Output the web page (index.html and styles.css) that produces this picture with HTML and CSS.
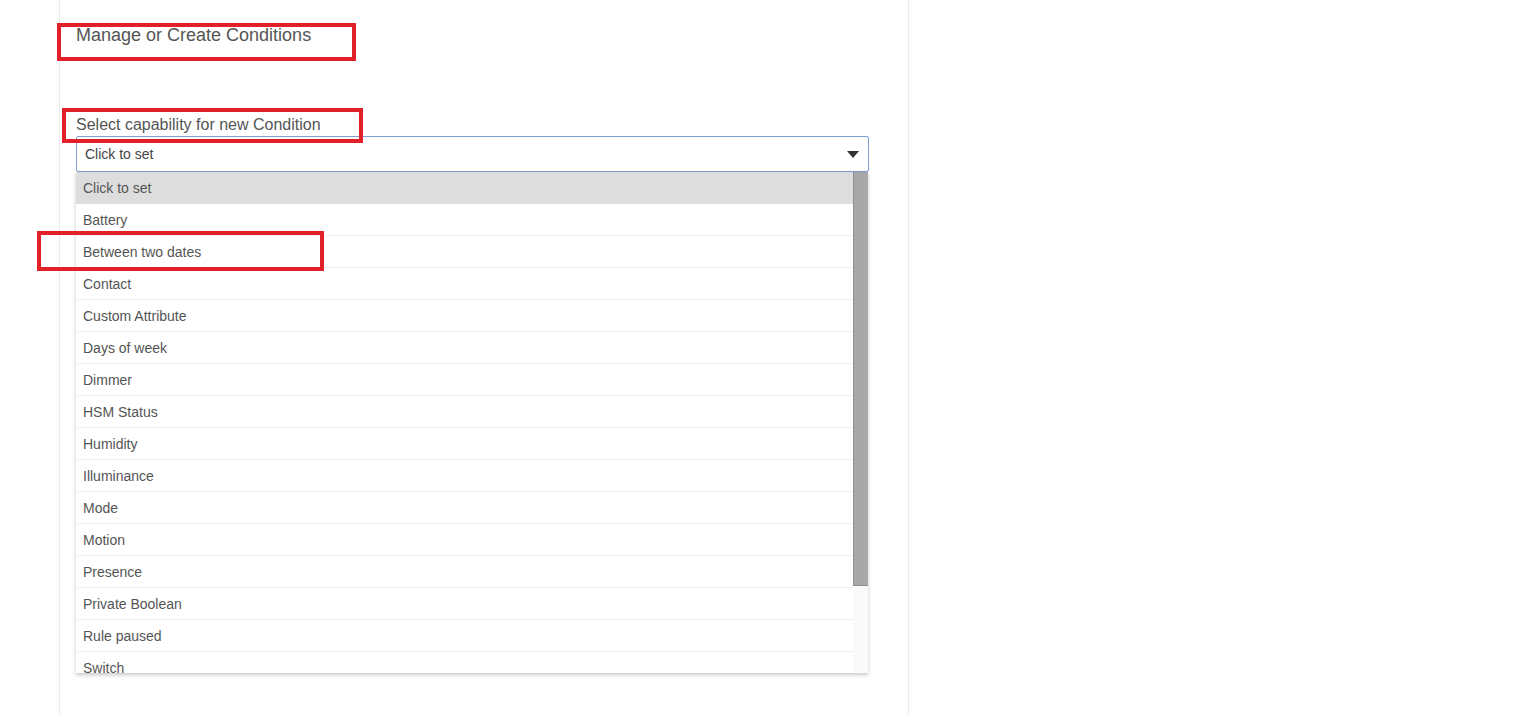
FILE: index.html
```
<!DOCTYPE html>
<html>
<head>
<meta charset="utf-8">
<link rel="stylesheet" href="styles.css">
</head>
<body>
<div class="page">
  <div class="card">
    <h2 class="title">Manage or Create Conditions</h2>
    <label class="label">Select capability for new Condition</label>
    <div class="select">
      <span>Click to set</span>
      <svg class="arrow" width="12" height="7" viewBox="0 0 12 7"><path d="M0 0H12L6 7Z" fill="#333"/></svg>
    </div>
    <div class="dropdown">
      <ul class="options">
        <li class="active">Click to set</li>
        <li>Battery</li>
        <li>Between two dates</li>
        <li>Contact</li>
        <li>Custom Attribute</li>
        <li>Days of week</li>
        <li>Dimmer</li>
        <li>HSM Status</li>
        <li>Humidity</li>
        <li>Illuminance</li>
        <li>Mode</li>
        <li>Motion</li>
        <li>Presence</li>
        <li>Private Boolean</li>
        <li>Rule paused</li>
        <li>Switch</li>
      </ul>
      <div class="scrollbar"><div class="thumb"></div></div>
    </div>
  </div>
</div>
<div class="mark mark1"></div>
<div class="mark mark2"></div>
<div class="mark mark3"></div>
</body>
</html>
```
FILE: styles.css
```
html, body {
  margin: 0;
  padding: 0;
  background: #fff;
  font-family: "Liberation Sans", Arial, sans-serif;
  color: #555;
  overflow: hidden;
}
.page {
  padding-left: 59px;
  height: 715px;
}
.card {
  width: 816px;
  height: 715px;
  border-left: 1px solid #ebebeb;
  border-right: 1px solid #ebebeb;
  padding: 0 16px;
}
.title {
  margin: 0;
  padding-top: 24px;
  font-size: 18px;
  font-weight: normal;
  line-height: 22px;
  color: #555;
}
.label {
  display: block;
  margin-top: 68px;
  font-size: 16px;
  line-height: 22px;
  color: #555;
}
.select {
  height: 34px;
  border: 1px solid #7e9fd0;
  border-radius: 2px;
  display: flex;
  align-items: center;
  justify-content: space-between;
  padding-left: 8px;
  box-sizing: content-box;
  font-size: 14px;
  color: #444;
  width: 783px;
}
.arrow {
  margin-right: 9px;
  margin-top: 1px;
}
.dropdown {
  width: 792px;
  height: 501px;
  display: flex;
  box-shadow: 0 2px 4px rgba(0,0,0,0.22);
  overflow: hidden;
  background: #fff;
}
.options {
  list-style: none;
  margin: 0;
  padding: 0;
  width: 777px;
}
.options li {
  height: 30px;
  line-height: 31px;
  padding-top: 1px;
  padding-left: 7px;
  font-size: 14px;
  color: #555;
  border-bottom: 1px solid #f0f0f0;
}
.options li.active {
  background: #dddddd;
  border-bottom-color: #dddddd;
}
.scrollbar {
  width: 15px;
  background: #fafafa;
}
.thumb {
  height: 413px;
  background: #a8a8a8;
  border-left: 1px solid #8a8f98;
  border-bottom: 1px solid #8a8f98;
}
.mark {
  position: absolute;
  border: 4px solid #e2202a;
  box-sizing: border-box;
}
.mark1 { left: 57px; top: 23px; width: 299px; height: 38px; }
.mark2 { left: 62px; top: 108px; width: 301px; height: 35px; }
.mark3 { left: 37px; top: 231px; width: 287px; height: 40px; }
```
